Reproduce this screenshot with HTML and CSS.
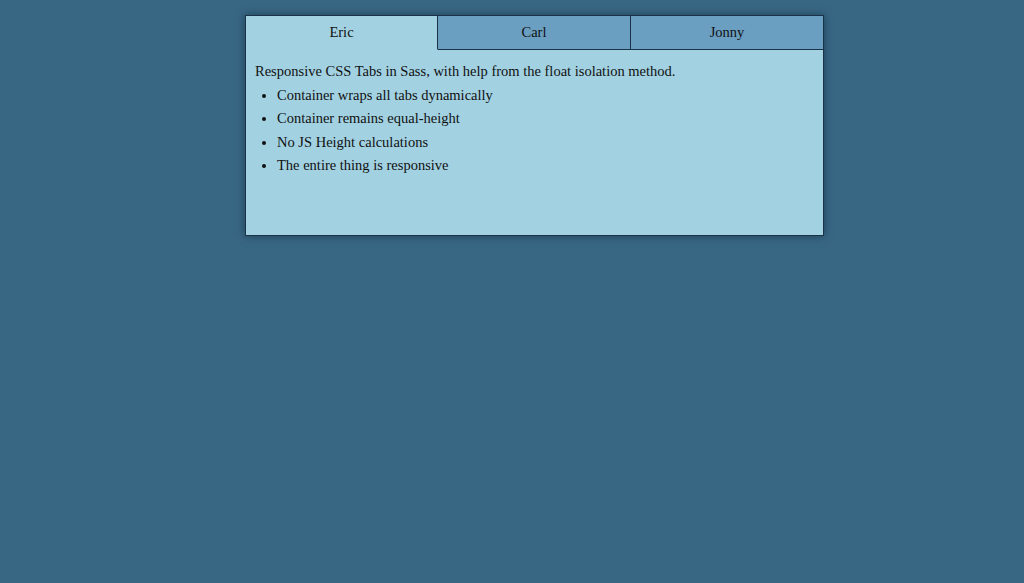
FILE: index.html
```html
<!DOCTYPE html>
<html>
<head>
<meta charset="utf-8">
<link rel="stylesheet" href="styles.css">
</head>
<body>
<div class="page">
  <div class="tabs">
    <div class="tabbar">
      <div class="tab tab-a active">Eric</div>
      <div class="tab tab-b">Carl</div>
      <div class="tab tab-c">Jonny</div>
    </div>
    <div class="panel">
      <p class="intro">Responsive CSS Tabs in Sass, with help from the float isolation method.</p>
      <ul class="list">
        <li>Container wraps all tabs dynamically</li>
        <li>Container remains equal-height</li>
        <li>No JS Height calculations</li>
        <li>The entire thing is responsive</li>
      </ul>
    </div>
  </div>
</div>
</body>
</html>
```
FILE: styles.css
```css
html, body {
  margin: 0;
  padding: 0;
  background: #386784;
  height: 100%;
}
body {
  font-family: "Liberation Serif", "Times New Roman", serif;
  font-size: 14.5px;
  color: #111;
}
.page {
  padding: 15px 0 0 245px;
}
.tabs {
  width: 577px;
  border: 1px solid #1b3347;
  background: #a2d2e2;
  box-shadow: 0 0 8px rgba(10, 30, 50, 0.55);
}
.tabbar {
  display: flex;
}
.tab {
  height: 33px;
  line-height: 33px;
  text-align: center;
  background: #6a9fc2;
  border-bottom: 1px solid #1b3347;
}
.tab-a {
  width: 191px;
  border-right: 1px solid #1b3347;
}
.tab-b {
  width: 192px;
  border-right: 1px solid #1b3347;
}
.tab-c {
  width: 192px;
}
.tab.active {
  background: #a2d2e2;
  border-bottom-color: #a2d2e2;
}
.panel {
  height: 185px;
  padding: 10px 9px 0 9px;
  box-sizing: border-box;
}
.intro {
  margin: 0;
  line-height: 23.5px;
}
.list {
  margin: 0;
  padding-left: 22px;
  line-height: 23.5px;
}
```
